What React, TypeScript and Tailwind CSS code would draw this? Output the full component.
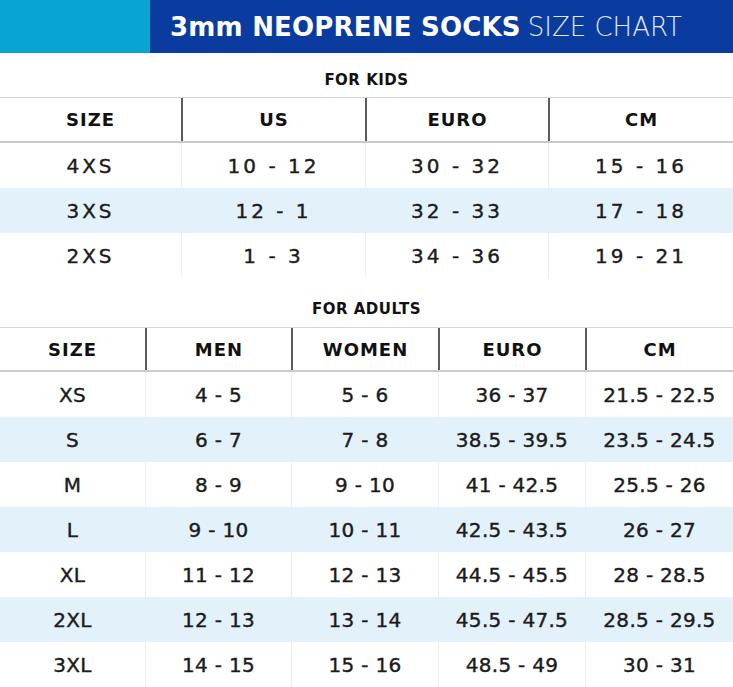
import React from "react";

const kidsHead = ["SIZE", "US", "EURO", "CM"];
const kidsRows = [
	["4XS", "10 - 12", "30 - 32", "15 - 16"],
	["3XS", "12 - 1", "32 - 33", "17 - 18"],
	["2XS", "1 - 3", "34 - 36", "19 - 21"],
];

const adultHead = ["SIZE", "MEN", "WOMEN", "EURO", "CM"];
const adultRows = [
	["XS", "4 - 5", "5 - 6", "36 - 37", "21.5 - 22.5"],
	["S", "6 - 7", "7 - 8", "38.5 - 39.5", "23.5 - 24.5"],
	["M", "8 - 9", "9 - 10", "41 - 42.5", "25.5 - 26"],
	["L", "9 - 10", "10 - 11", "42.5 - 43.5", "26 - 27"],
	["XL", "11 - 12", "12 - 13", "44.5 - 45.5", "28 - 28.5"],
	["2XL", "12 - 13", "13 - 14", "45.5 - 47.5", "28.5 - 29.5"],
	["3XL", "14 - 15", "15 - 16", "48.5 - 49", "30 - 31"],
];

type TableProps = {
	head: string[];
	rows: string[][];
	cols: string;
	headH: string;
	bodyText: string;
};

const SizeTable = ({ head, rows, cols, headH, bodyText }: TableProps) => (
	<div>
		<div
			className={`grid ${cols} ${headH} border-t border-b-2 border-t-[#d4d4d4] border-b-[#cacaca]`}
		>
			{head.map((h, i) => (
				<div
					key={h}
					className={`flex items-center justify-center font-bold text-[18px] tracking-[1px] text-[#111] ${
						i > 0 ? "border-l-2 border-[#5c5c5c]" : ""
					}`}
				>
					{h}
				</div>
			))}
		</div>
		{rows.map((r, ri) => (
			<div
				key={r[0]}
				className={`grid ${cols} h-[45px] ${ri % 2 === 1 ? "bg-[#e3f1fb]" : "bg-white"}`}
			>
				{r.map((c, i) => (
					<div
						key={i}
						className={`flex items-center justify-center text-[#1b1b1b] [-webkit-text-stroke:0.4px_#1b1b1b] ${bodyText} ${
							i > 0 ? "border-l border-[#eceff2]" : ""
						}`}
					>
						{c}
					</div>
				))}
			</div>
		))}
	</div>
);

const App = () => {
	return (
		<div className="w-[733px] h-[687px] overflow-hidden bg-white font-['DejaVu_Sans',sans-serif]">
			<div className="flex h-[53px]">
				<div className="w-[150px] bg-[#08a5d2]" />
				<div className="flex-1 flex items-center pl-[20px] bg-[#0a3b9f] text-white text-[26px] leading-none">
					<span className="font-bold tracking-[0.2px]">3mm NEOPRENE SOCKS</span>
					<span className="ml-[7px] font-extralight text-[#e4e9f6]">SIZE CHART</span>
				</div>
			</div>

			<div className="h-[44px] pt-[10px] flex items-center justify-center font-bold text-[15px] tracking-[0.5px] text-[#111]">
				FOR KIDS
			</div>
			<SizeTable
				head={kidsHead}
				rows={kidsRows}
				cols="grid-cols-[181px_184px_183px_1fr]"
				headH="h-[46px]"
				bodyText="text-[20px] tracking-[3px]"
			/>

			<div className="h-[49px] pt-[13px] flex items-center justify-center font-bold text-[15px] tracking-[0.5px] text-[#111]">
				FOR ADULTS
			</div>
			<SizeTable
				head={adultHead}
				rows={adultRows}
				cols="grid-cols-[145px_146px_147px_147px_1fr]"
				headH="h-[45px]"
				bodyText="text-[20px] tracking-[0.3px]"
			/>
		</div>
	);
};

export default App;
